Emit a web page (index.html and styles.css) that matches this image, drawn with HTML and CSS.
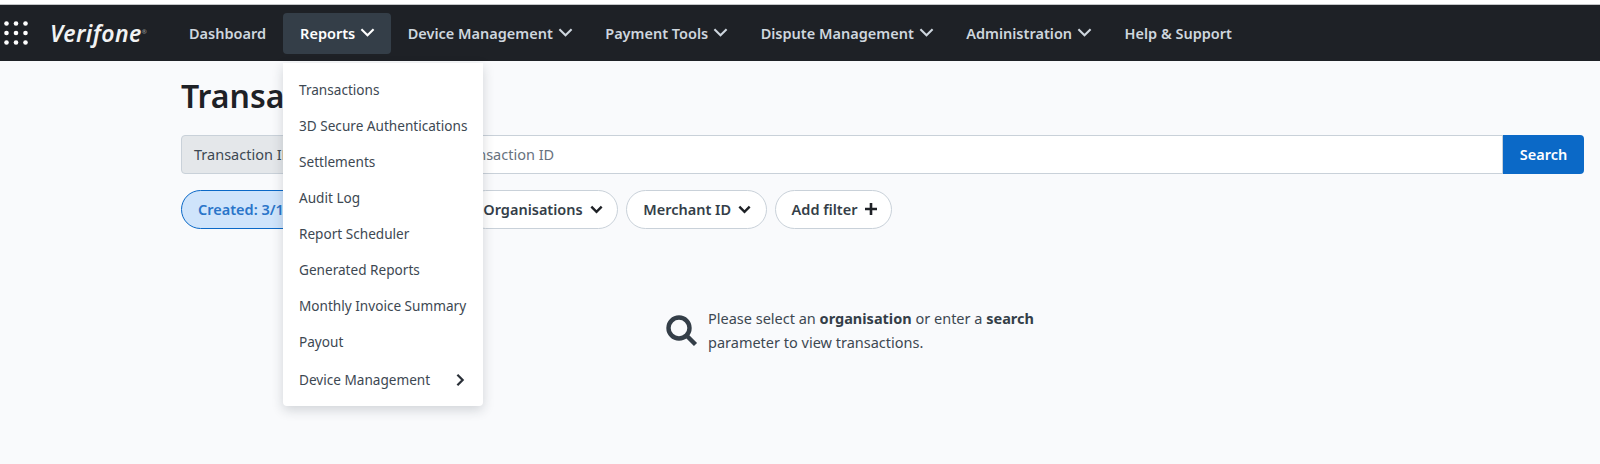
FILE: index.html
```html
<!DOCTYPE html>
<html lang="en">
<head>
    <meta charset="UTF-8">
    <meta name="viewport" content="width=device-width, initial-scale=1.0">
    <title>Transactions - Verifone</title>
    <link rel="stylesheet" href="styles.css">
</head>
<body>
    <!-- Top navigation -->
    <nav class="navbar">
        <svg class="apps-icon" width="24" height="24" viewBox="0 0 24 24" fill="#fff">
            <circle cx="2.5" cy="2.5" r="2.3"/><circle cx="12" cy="2.5" r="2.3"/><circle cx="21.5" cy="2.5" r="2.3"/>
            <circle cx="2.5" cy="12" r="2.3"/><circle cx="12" cy="12" r="2.3"/><circle cx="21.5" cy="12" r="2.3"/>
            <circle cx="2.5" cy="21.5" r="2.3"/><circle cx="12" cy="21.5" r="2.3"/><circle cx="21.5" cy="21.5" r="2.3"/>
        </svg>
        <span class="logo">Verifone<span class="logo-mark">®</span></span>
        <ul class="nav-links">
            <li class="nav-item">Dashboard</li>
            <li class="nav-item has-caret active">Reports
                <svg class="chevron" viewBox="0 0 16 16"><path d="M1.5 4.5L8 11l6.5-6.5"/></svg>
            </li>
            <li class="nav-item has-caret">Device Management
                <svg class="chevron" viewBox="0 0 16 16"><path d="M1.5 4.5L8 11l6.5-6.5"/></svg>
            </li>
            <li class="nav-item has-caret">Payment Tools
                <svg class="chevron" viewBox="0 0 16 16"><path d="M1.5 4.5L8 11l6.5-6.5"/></svg>
            </li>
            <li class="nav-item has-caret">Dispute Management
                <svg class="chevron" viewBox="0 0 16 16"><path d="M1.5 4.5L8 11l6.5-6.5"/></svg>
            </li>
            <li class="nav-item has-caret">Administration
                <svg class="chevron" viewBox="0 0 16 16"><path d="M1.5 4.5L8 11l6.5-6.5"/></svg>
            </li>
            <li class="nav-item">Help &amp; Support</li>
        </ul>
    </nav>

    <!-- Reports dropdown -->
    <ul class="dropdown">
        <li>Transactions</li>
        <li>3D Secure Authentications</li>
        <li>Settlements</li>
        <li>Audit Log</li>
        <li>Report Scheduler</li>
        <li>Generated Reports</li>
        <li>Monthly Invoice Summary</li>
        <li>Payout</li>
        <li class="has-submenu">Device Management
            <svg class="chevron-right" viewBox="0 0 16 16"><path d="M5 2L11 8l-6 6"/></svg>
        </li>
    </ul>

    <main class="content">
        <h1 class="page-title">Transactions</h1>

        <div class="search-group">
            <div class="search-type">Transaction ID</div>
            <input class="search-input" type="text" placeholder="Transaction ID">
            <button class="search-btn" type="button">Search</button>
        </div>

        <div class="filters">
            <button class="chip chip-active" type="button">Created: 3/1</button>
            <button class="chip chip-orgs" type="button">Organisations
                <svg class="chevron chevron-bold" viewBox="0 0 16 16"><path d="M2.5 5l5.5 5.5L13.5 5"/></svg>
            </button>
            <button class="chip" type="button">Merchant ID
                <svg class="chevron chevron-bold" viewBox="0 0 16 16"><path d="M2.5 5l5.5 5.5L13.5 5"/></svg>
            </button>
            <button class="chip" type="button">Add filter
                <svg class="plus" viewBox="0 0 14 14"><path d="M7 1v12M1 7h12"/></svg>
            </button>
        </div>

        <div class="empty-state">
            <svg class="empty-icon" width="32" height="32" viewBox="0 0 32 32">
                <circle cx="13" cy="13" r="10.5"/>
                <path d="M20.5 20.5L29.5 29.5"/>
            </svg>
            <p>Please select an <strong>organisation</strong> or enter a <strong>search</strong><br>parameter to view transactions.</p>
        </div>
    </main>
</body>
</html>
```

FILE: styles.css
```css
:root {
    --nav-bg: #1e2126;
    --nav-active: #343e48;
    --nav-text: #ced6de;
    --page-bg: #f9fafc;
    --text: #3d4852;
    --strong: #343e48;
    --primary: #0b69c7;
    --border: #c9d1d9;
}

* {
    margin: 0;
    padding: 0;
    box-sizing: border-box;
    font-family: 'Noto Sans', sans-serif;
}

html, body {
    height: 464px;
    overflow: hidden;
}

body {
    background: var(--page-bg);
    border-top: 4px solid #fff;
    color: var(--text);
    font-size: 14.5px;
    position: relative;
}

.navbar {
    display: flex;
    align-items: center;
    height: 57px;
    background: var(--nav-bg);
    border-top: 1px solid #c4c6c8;
    padding-left: 4px;
}

.apps-icon {
    flex: none;
}

.logo {
    color: #f1f2f3;
    font-size: 23px;
    font-style: italic;
    font-weight: 600;
    letter-spacing: 0.4px;
    margin-left: 22px;
    width: 122px;
}

.logo-mark {
    font-size: 6px;
    font-style: normal;
    vertical-align: 8px;
    color: #999;
}

.nav-links {
    display: flex;
    list-style: none;
}

.nav-item {
    display: flex;
    align-items: center;
    gap: 5px;
    height: 41px;
    padding: 0 17px 1px;
    border-radius: 4px;
    color: var(--nav-text);
    font-weight: 600;
    white-space: nowrap;
}

.nav-item.has-caret {
    padding-right: 15.4px;
}

.nav-item.active {
    background: var(--nav-active);
    color: #fff;
}

.chevron {
    width: 15px;
    height: 15px;
    fill: none;
    stroke: currentColor;
    stroke-width: 2.2;
}

.chevron-bold {
    stroke: #1e2126;
    stroke-width: 2.6;
}

.dropdown {
    position: absolute;
    top: 59px;
    left: 283px;
    width: 200px;
    height: 343px;
    padding: 8px 0;
    background: #fff;
    border-radius: 0 0 4px 4px;
    box-shadow: 0 4px 12px rgba(30, 40, 50, 0.18);
    list-style: none;
    z-index: 10;
}

.dropdown li {
    display: flex;
    align-items: center;
    justify-content: space-between;
    height: 36px;
    padding: 0 16px;
    font-size: 13.6px;
    color: var(--text);
    white-space: nowrap;
}

.dropdown .has-submenu {
    height: 41px;
}

.chevron-right {
    width: 14px;
    height: 14px;
    fill: none;
    stroke: #2a3038;
    stroke-width: 2.6;
}

.content {
    padding: 0 16px 0 181px;
}

.page-title {
    margin-top: 13px;
    font-size: 32px;
    line-height: 44px;
    font-weight: 600;
    color: #1e2126;
}

.search-group {
    display: flex;
    height: 39px;
    margin-top: 17px;
}

.search-type {
    display: flex;
    align-items: center;
    width: 262px;
    padding: 0 0 1px 12px;
    background: #e4e7ea;
    border: 1px solid var(--border);
    border-radius: 4px 0 0 4px;
}

.search-input {
    flex: 1;
    padding: 0 0 2px 13px;
    background: #fff;
    border: 1px solid var(--border);
    border-left: none;
    font-size: 14.5px;
    outline: none;
}

.search-input::placeholder {
    color: #67727e;
}

.search-btn {
    width: 81px;
    padding-bottom: 1px;
    background: var(--primary);
    border: none;
    border-radius: 0 4px 4px 0;
    color: #fff;
    font-size: 14.5px;
    font-weight: 600;
}

.filters {
    display: flex;
    gap: 8px;
    width: 711px;
    margin-top: 16px;
}

.chip {
    display: flex;
    align-items: center;
    gap: 6px;
    height: 39px;
    padding: 0 13.5px 1px 16px;
    background: #fff;
    border: 1px solid var(--border);
    border-radius: 20px;
    color: var(--strong);
    font-size: 14.5px;
    font-weight: 600;
    white-space: nowrap;
}

.chip-active {
    width: 200px;
    background: #cfe4fb;
    border-color: var(--primary);
    color: #2a75c9;
}

.chip-orgs {
    margin-left: auto;
}

.plus {
    width: 14px;
    height: 14px;
    fill: none;
    stroke: #1e2126;
    stroke-width: 2.6;
}

.empty-state {
    display: flex;
    align-items: center;
    gap: 10px;
    margin: 77px 0 0 485px;
    line-height: 24px;
}

.empty-state strong {
    color: var(--strong);
}

.empty-icon {
    fill: none;
    stroke: var(--strong);
    stroke-width: 4.4;
    margin-top: 2px;
}
```
